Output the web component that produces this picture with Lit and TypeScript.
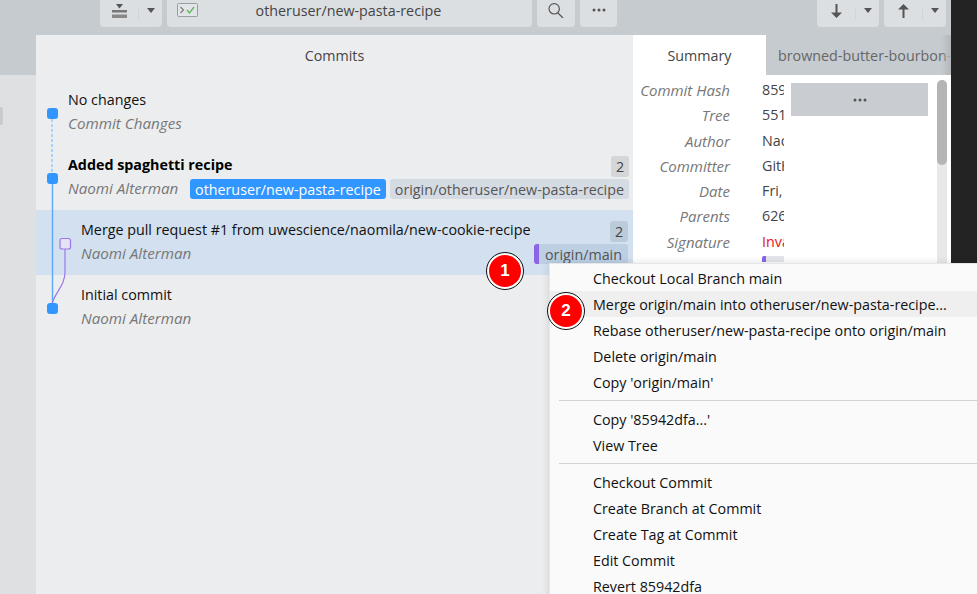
import { LitElement, html, css, svg } from "lit";
import { customElement } from "lit/decorators.js";

const caret = html`<svg class="caret" width="8" height="5" viewBox="0 0 8 5"><path d="M0 0h8L4 5z" fill="#555"/></svg>`;

@customElement("app-root")
export class AppRoot extends LitElement {
  static styles = css`
    :host { display: block; width: 977px; height: 594px; overflow: hidden; position: relative;
      font-family: "Open Sans", sans-serif; font-size: 14.3px; color: #222; background: #c6cbcf; }
    * { box-sizing: border-box; }
    .frame { display: flex; height: 594px; }
    .app { width: 951px; display: flex; flex-direction: column; }
    .dark { width: 26px; background: #232323; }
    .toolbar { height: 35px; display: flex; padding: 0 5px 8px 100px; gap: 5px; flex: none; }
    .btn { background: #dcdfe2; border-radius: 0 0 4px 4px; display: flex; align-items: center; justify-content: center; color: #444; padding-bottom: 7px; }
    .seg { display: flex; width: 62px; padding-bottom: 0; }
    .seg .a { flex: 1; display: flex; align-items: center; justify-content: center; padding-bottom: 5px; }
    .seg .b { width: 24px; border-left: 1px solid #d2d5d8; display: flex; align-items: center; justify-content: center; padding-bottom: 7px; }
    .title { width: 365px; position: relative; color: #444; }
    .title svg { position: absolute; left: 10px; top: 3px; }
    .title span { margin-left: -2px; }
    .search { width: 38px; }
    .more { width: 37px; }
    .spacer { flex: 1; }
    .body { flex: 1; display: flex; min-height: 0; }
    .side { width: 36px; display: flex; flex-direction: column; }
    .side-top { height: 40px; flex: none; }
    .side-low { flex: 1; background: #dee0e2; padding-top: 32px; }
    .grip { width: 3px; height: 18px; background: #c9cbcd; border-radius: 0 2px 2px 0; }
    .commits { width: 597px; background: #ecedef; display: flex; flex-direction: column; position: relative; }
    .commits-head { height: 40px; flex: none; display: flex; align-items: center; justify-content: center; color: #444; }
    .list { padding-top: 5px; position: relative; }
    .graph { position: absolute; left: -36px; top: -75px; pointer-events: none; }
    .row { height: 65px; padding: 7px 4px 0 32px; }
    .row.in { padding-left: 45px; }
    .row.sel { background: #d2e0ef; padding-right: 5px; }
    .line { height: 24px; display: flex; align-items: center; white-space: nowrap; }
    .msg { color: #111; }
    .msg.bold { font-weight: 700; color: #000; }
    .author { font-style: italic; color: #777; font-size: 15.2px; }
    .right { margin-left: auto; display: flex; gap: 4px; margin-top: 2px; }
    .count { width: 18px; height: 21px; border-radius: 3px; background: #d5d6d8; display: flex; align-items: center; justify-content: center; color: #444; margin-left: auto; margin-top: 5px; }
    .sel .count { background: #bccbd9; }
    .chip { height: 20px; padding: 0 5px; border-radius: 3px; background: #d5dbe3; color: #555; display: flex; align-items: center; }
    .chip.cur { background: #3296ff; color: #fff; }
    .chip.rem { background: #bccfe3; border-left: 5px solid #8d63e8; padding: 0 6px; }
    .detail { width: 318px; display: flex; flex-direction: column; }
    .tabs { height: 40px; flex: none; display: flex; }
    .tab { width: 133px; background: #fff; display: flex; align-items: center; justify-content: center; color: #444; }
    .tab2 { flex: 1; padding-left: 12px; display: flex; align-items: center; color: #666; overflow: hidden; white-space: nowrap; position: relative; }
    .tab2::after { content: ""; position: absolute; right: 0; top: 0; bottom: 0; width: 10px; background: linear-gradient(90deg, transparent, #b4b8bb); }
    .pane { flex: 1; background: #fff; display: flex; padding: 5px 4px 0 0; }
    .meta { width: 151px; flex: none; display: grid; grid-template-columns: 97px 22px; column-gap: 32px; grid-auto-rows: 25.3px; align-content: start; margin-top: -1px; }
    .k { font-style: italic; color: #777; font-size: 15px; text-align: right; line-height: 22px; white-space: nowrap; }
    .v { color: #444; overflow: hidden; white-space: nowrap; line-height: 22px; }
    .v.bad { color: #e81123; }
    .tag { height: 6px; margin-top: 0; background: #e3e5ea; border-left: 4px solid #8d63e8; border-radius: 2px 0 0 0; }
    .act { width: 137px; height: 33px; margin: 3px 0 0 7px; background: #c9cdd1; display: flex; align-items: center; justify-content: center; flex: none; }
    .track { width: 10px; margin-left: 9px; background: #e8e8e8; border-radius: 5px 5px 0 0; flex: none; }
    .thumb { height: 85px; background: #b5b5b5; border-radius: 5px; }
    .menu { position: absolute; left: 549px; top: 263px; width: 460px; height: 340px; background: #fafafa; border: 1px solid #e6e6e6; padding-top: 1px; box-shadow: 0 0 8px rgba(0,0,0,.12); }
    .item { height: 26px; padding-left: 43px; display: flex; align-items: center; color: #111; white-space: nowrap; }
    .item.hot { background: #efefef; }
    .sep { height: 1px; margin: 5px 0 5px 9px; background: #d2d2d2; }
    .mark { position: absolute; width: 36px; height: 36px; border-radius: 50%; background: #f00; border: 2px solid #fff; outline: 1px solid #111;
      color: #fff; font-weight: 700; font-size: 17px; font-family: "Liberation Sans", sans-serif; display: flex; align-items: center; justify-content: center; }
  `;

  graph() {
    const node = (y: number) => svg`<rect x="47" y=${y} width="11" height="11" rx="3" fill="#3296ff"/>`;
    return html`<svg class="graph" width="100" height="340" viewBox="0 0 100 340">
      <path d="M52 119V173" stroke="#a8d2fa" stroke-width="2" stroke-dasharray="3 2" fill="none"/>
      <path d="M52.5 184V303" stroke="#5aa9fb" stroke-width="1.4" fill="none"/>
      <path d="M65 249V272C65 286 55 292 52 304" stroke="#9a78ea" stroke-width="1.2" fill="none"/>
      <rect x="60" y="238.5" width="10.5" height="10.5" rx="2" fill="#e4e2f4" stroke="#9a78ea" stroke-width="1.2"/>
      ${node(108)}${node(173)}${node(303)}
    </svg>`;
  }

  render() {
    const meta: [string, string, string?][] = [
      ["Commit Hash", "85942dfa"], ["Tree", "55142"], ["Author", "Naomi"], ["Committer", "GitHub"],
      ["Date", "Fri,"], ["Parents", "62648"], ["Signature", "Invalid", "bad"],
    ];
    const group1 = ["Checkout Local Branch main", "Merge origin/main into otheruser/new-pasta-recipe...", "Rebase otheruser/new-pasta-recipe onto origin/main", "Delete origin/main", "Copy 'origin/main'"];
    const group2 = ["Copy '85942dfa...'", "View Tree"];
    const group3 = ["Checkout Commit", "Create Branch at Commit", "Create Tag at Commit", "Edit Commit", "Revert 85942dfa"];
    return html`
      <div class="frame">
        <div class="app">
          <div class="toolbar">
            <div class="btn seg">
              <div class="a"><svg width="15" height="14" viewBox="0 0 15 14"><path d="M4 0h7L7.5 4.5z" fill="#555"/><rect x="0" y="6" width="15" height="2.5" fill="#777"/><rect x="0" y="10.5" width="15" height="3.5" fill="#888"/></svg></div>
              <div class="b">${caret}</div>
            </div>
            <div class="btn title">
              <svg width="21" height="14" viewBox="0 0 21 14"><rect x=".5" y=".5" width="20" height="13" rx="1" fill="#e2e5e7" stroke="#9a9e9e"/><path d="M3.5 4l3 3-3 3" fill="none" stroke="#777" stroke-width="1.1"/><path d="M10 7l2.5 3 4.5-6" fill="none" stroke="#5cb85c" stroke-width="1.3"/></svg>
              <span>otheruser/new-pasta-recipe</span>
            </div>
            <div class="btn search"><svg width="16" height="15" viewBox="0 0 16 15"><circle cx="6.2" cy="5.8" r="5.2" fill="none" stroke="#555" stroke-width="1.2"/><path d="M10 10l5 5" stroke="#555" stroke-width="1.3"/></svg></div>
            <div class="btn more"><svg width="14" height="4" viewBox="0 0 14 4"><circle cx="2" cy="2" r="1.5" fill="#555"/><circle cx="7" cy="2" r="1.5" fill="#555"/><circle cx="12" cy="2" r="1.5" fill="#555"/></svg></div>
            <div class="spacer"></div>
            <div class="btn seg">
              <div class="a"><svg width="11" height="14" viewBox="0 0 11 14"><path d="M4.5 0h2v8.5H11L5.5 14 0 8.5h4.5z" fill="#555"/></svg></div>
              <div class="b">${caret}</div>
            </div>
            <div class="btn seg">
              <div class="a"><svg width="11" height="14" viewBox="0 0 11 14"><path d="M4.5 14h2V5.5H11L5.5 0 0 5.5h4.5z" fill="#555"/></svg></div>
              <div class="b">${caret}</div>
            </div>
          </div>
          <div class="body">
            <div class="side"><div class="side-top"></div><div class="side-low"><div class="grip"></div></div></div>
            <div class="commits">
              <div class="commits-head">Commits</div>
              <div class="list">
                ${this.graph()}
                <div class="row">
                  <div class="line msg">No changes</div>
                  <div class="line author">Commit Changes</div>
                </div>
                <div class="row">
                  <div class="line"><span class="msg bold">Added spaghetti recipe</span><span class="count">2</span></div>
                  <div class="line"><span class="author">Naomi Alterman</span>
                    <div class="right"><span class="chip cur">otheruser/new-pasta-recipe</span><span class="chip">origin/otheruser/new-pasta-recipe</span></div></div>
                </div>
                <div class="row in sel">
                  <div class="line"><span class="msg">Merge pull request #1 from uwescience/naomila/new-cookie-recipe</span><span class="count">2</span></div>
                  <div class="line"><span class="author">Naomi Alterman</span>
                    <div class="right"><span class="chip rem">origin/main</span></div></div>
                </div>
                <div class="row in">
                  <div class="line msg">Initial commit</div>
                  <div class="line author">Naomi Alterman</div>
                </div>
              </div>
            </div>
            <div class="detail">
              <div class="tabs"><div class="tab">Summary</div><div class="tab2">browned-butter-bourbon-cookies</div></div>
              <div class="pane">
                <div class="meta">
                  ${meta.map(([k, v, c]) => html`<div class="k">${k}</div><div class="v ${c ?? ""}">${v}</div>`)}
                  <div></div><div class="tag"></div>
                </div>
                <div class="act"><svg width="14" height="4" viewBox="0 0 14 4"><circle cx="2" cy="2" r="1.5" fill="#555"/><circle cx="7" cy="2" r="1.5" fill="#555"/><circle cx="12" cy="2" r="1.5" fill="#555"/></svg></div>
                <div class="track"><div class="thumb"></div></div>
              </div>
            </div>
          </div>
        </div>
        <div class="dark"></div>
      </div>
      <div class="menu">
        ${group1.map((t, i) => html`<div class="item ${i === 1 ? "hot" : ""}">${t}</div>`)}
        <div class="sep"></div>
        ${group2.map((t) => html`<div class="item">${t}</div>`)}
        <div class="sep"></div>
        ${group3.map((t) => html`<div class="item">${t}</div>`)}
      </div>
      <div class="mark" style="left:487px;top:253px">1</div>
      <div class="mark" style="left:548px;top:293px">2</div>
    `;
  }
}
